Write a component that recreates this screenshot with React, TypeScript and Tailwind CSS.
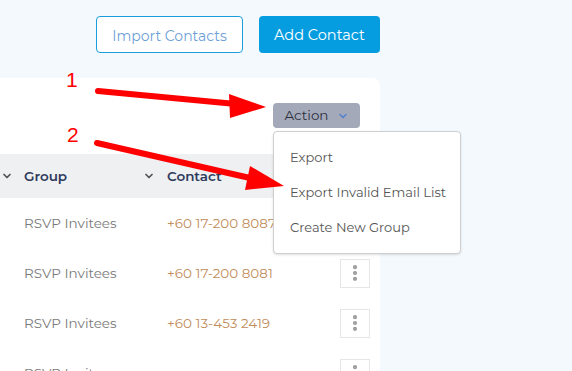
import { ChevronDown, EllipsisVertical } from "lucide-react";

const rows = [
  { group: "RSVP Invitees", contact: "+60 17-200 8087" },
  { group: "RSVP Invitees", contact: "+60 17-200 8081" },
  { group: "RSVP Invitees", contact: "+60 13-453 2419" },
  { group: "RSVP Invitees", contact: "" },
];

function Annotations() {
  return (
    <svg className="pointer-events-none absolute inset-0" width="572" height="371" viewBox="0 0 572 371">
      <text x="66" y="87" fill="#ff0000" fontSize="21" fontFamily="Liberation Sans, sans-serif">1</text>
      <text x="67" y="142" fill="#ff0000" fontSize="21" fontFamily="Liberation Sans, sans-serif">2</text>
      <line x1="98" y1="91" x2="236" y2="104" stroke="#ff0000" strokeWidth="6" strokeLinecap="round" />
      <polygon points="229,94 266,107 230,118" fill="#ff0000" />
      <line x1="97" y1="143" x2="250" y2="178" stroke="#ff0000" strokeWidth="6" strokeLinecap="round" />
      <polygon points="250,166 284,186 245,190" fill="#ff0000" />
    </svg>
  );
}

export default function App() {
  return (
    <div className="relative h-[371px] w-[572px] overflow-hidden bg-[#f3f9fd] font-['Montserrat','Open_Sans',sans-serif]">
      <div className="flex h-[78px] items-start gap-4 pl-[96px] pt-4">
        <button className="h-[37px] w-[147px] rounded border border-[#1a9fdc] bg-white pt-[3px] text-[14px] text-[#6d9fd8]">
          Import Contacts
        </button>
        <button className="h-[37px] w-[121px] rounded bg-[#069de0] pt-[3px] text-[14.5px] text-white">Add Contact</button>
      </div>

      <div className="relative h-[293px] w-[380px] rounded-tr-lg bg-white">
        <div className="flex h-[76px] items-start justify-end pr-5 pt-[25px]">
          <button className="flex h-[25px] w-[87px] items-center justify-center gap-2 rounded-sm bg-[#a4a9ba] text-[13.5px] text-[#2b2f3b]">
            Action
            <ChevronDown className="h-3 w-3 text-[#4b7fd0]" strokeWidth={2.5} />
          </button>
        </div>

        <div className="flex h-[44px] items-center bg-[#eef0f2] text-[13.5px] font-semibold text-[#2e3a5c]">
          <ChevronDown className="ml-[1px] h-3 w-3 text-[#555]" strokeWidth={3.5} />
          <span className="ml-[11px] w-[119px]">Group</span>
          <ChevronDown className="h-3 w-3 text-[#555]" strokeWidth={3.5} />
          <span className="ml-[12px]">Contact</span>
        </div>

        {rows.map((r, i) => (
          <div key={i} className="flex h-[50px] items-center text-[13.5px]">
            <span className="w-[167px] pl-[24px] text-[#7a7a7a]">{r.group}</span>
            <span className="w-[173px] text-[#c28d5c]">{r.contact}</span>
            <div className="flex h-[29px] w-[30px] items-center justify-center border border-[#e6e6e6] bg-white">
              <EllipsisVertical className="h-5 w-5 text-[#9a9a9a]" strokeWidth={3} />
            </div>
          </div>
        ))}

        <div className="absolute left-[273px] top-[53px] w-[188px] rounded border border-[#cfcfcf] bg-white pb-[8px] pt-[8px] shadow-sm">
          {["Export", "Export Invalid Email List", "Create New Group"].map((item) => (
            <div key={item} className="flex h-[35px] items-center pl-[16px] text-[13px] text-[#555]">
              {item}
            </div>
          ))}
        </div>
      </div>

      <Annotations />
    </div>
  );
}
